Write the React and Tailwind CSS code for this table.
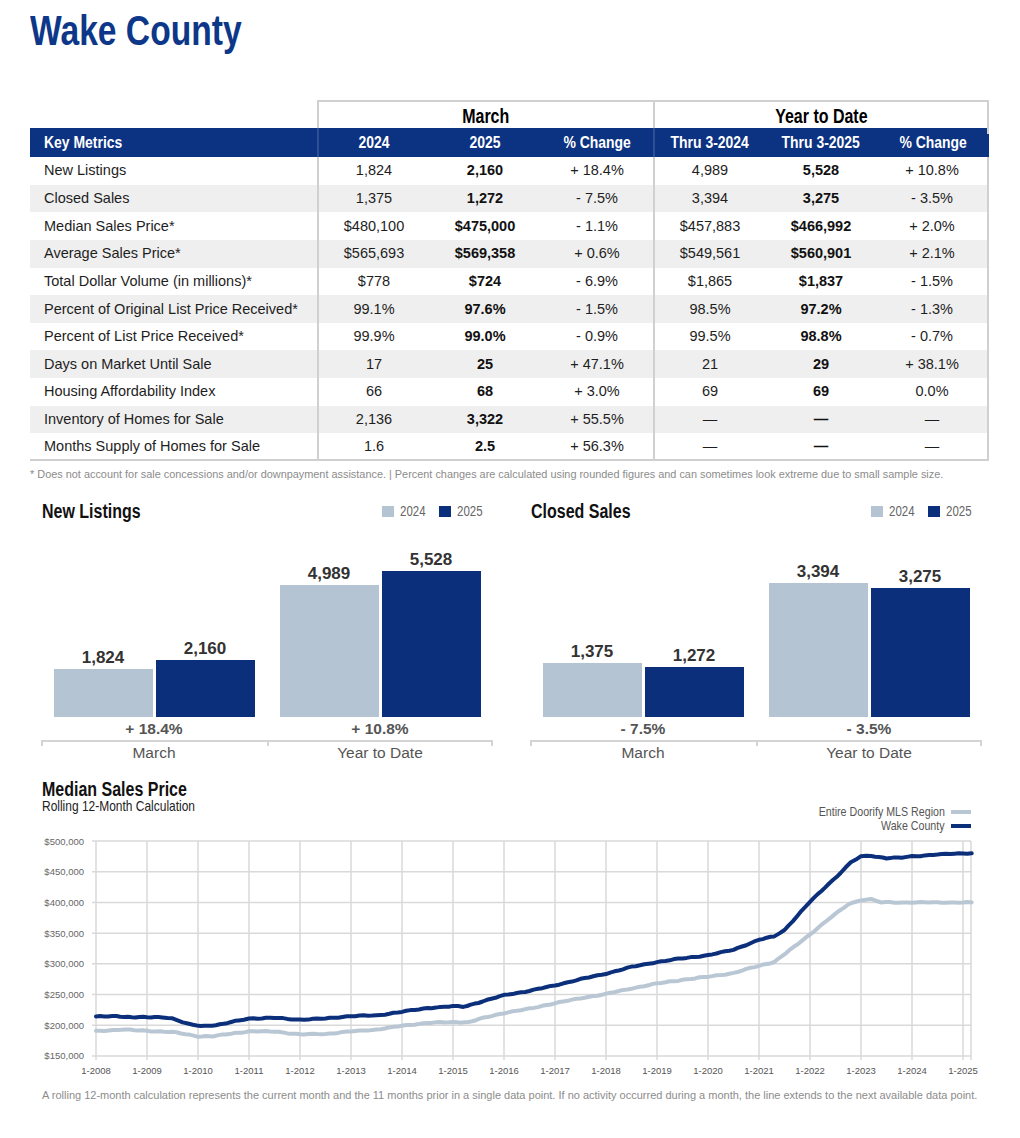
import React from "react";

function N({ children, className = "", origin = "origin-left" }) {
  return <span className={`inline-block whitespace-nowrap scale-x-[0.82] ${origin} ${className}`}>{children}</span>;
}

const rows = [
  ["New Listings", "1,824", "2,160", "+ 18.4%", "4,989", "5,528", "+ 10.8%"],
  ["Closed Sales", "1,375", "1,272", "- 7.5%", "3,394", "3,275", "- 3.5%"],
  ["Median Sales Price*", "$480,100", "$475,000", "- 1.1%", "$457,883", "$466,992", "+ 2.0%"],
  ["Average Sales Price*", "$565,693", "$569,358", "+ 0.6%", "$549,561", "$560,901", "+ 2.1%"],
  ["Total Dollar Volume (in millions)*", "$778", "$724", "- 6.9%", "$1,865", "$1,837", "- 1.5%"],
  ["Percent of Original List Price Received*", "99.1%", "97.6%", "- 1.5%", "98.5%", "97.2%", "- 1.3%"],
  ["Percent of List Price Received*", "99.9%", "99.0%", "- 0.9%", "99.5%", "98.8%", "- 0.7%"],
  ["Days on Market Until Sale", "17", "25", "+ 47.1%", "21", "29", "+ 38.1%"],
  ["Housing Affordability Index", "66", "68", "+ 3.0%", "69", "69", "0.0%"],
  ["Inventory of Homes for Sale", "2,136", "3,322", "+ 55.5%", "—", "—", "—"],
  ["Months Supply of Homes for Sale", "1.6", "2.5", "+ 56.3%", "—", "—", "—"],
];

function MetricsTable() {
  return (
    <div className="ml-[30px] w-[959px]">
      <div className="grid grid-cols-[287px_336px_336px] h-[28px]">
        <div />
        <div className="border-t-2 border-l-2 border-[#d0d0d0] flex items-center justify-center pb-[3px] text-[19.5px] font-bold text-black">
          <N origin="origin-center">March</N>
        </div>
        <div className="border-t-2 border-l-2 border-r-2 border-[#d0d0d0] flex items-center justify-center pb-[3px] text-[19.5px] font-bold text-black">
          <N origin="origin-center">Year to Date</N>
        </div>
      </div>
      <div className="grid grid-cols-[287px_repeat(6,112px)] h-[29px] bg-[#0c3282] text-white text-[17px] font-bold">
        <div className="flex items-center pl-[14px]"><N>Key Metrics</N></div>
        <div className="flex items-center justify-center border-l-2 border-[#2d4f95]"><N origin="origin-center">2024</N></div>
        <div className="flex items-center justify-center"><N origin="origin-center">2025</N></div>
        <div className="flex items-center justify-center"><N origin="origin-center">% Change</N></div>
        <div className="flex items-center justify-center border-l-2 border-[#2d4f95]"><N origin="origin-center">Thru 3-2024</N></div>
        <div className="flex items-center justify-center"><N origin="origin-center">Thru 3-2025</N></div>
        <div className="flex items-center justify-center"><N origin="origin-center">% Change</N></div>
      </div>
      {rows.map((r, i) => (
        <div
          key={r[0]}
          className={`grid grid-cols-[287px_repeat(6,112px)] h-[27.64px] text-[14.5px] text-[#1e1e1e] ${i % 2 === 1 ? "bg-[#efefef]" : "bg-white"} ${i === rows.length - 1 ? "border-b-2 border-[#d0d0d0]" : ""}`}
        >
          <div className="flex items-center pl-[14px] pt-[1px]">{r[0]}</div>
          <div className="flex items-center justify-center pt-[1px] border-l-2 border-[#d0d0d0]">{r[1]}</div>
          <div className="flex items-center justify-center pt-[1px] font-bold text-[#111]">{r[2]}</div>
          <div className="flex items-center justify-center pt-[1px]">{r[3]}</div>
          <div className="flex items-center justify-center pt-[1px] border-l-2 border-[#d0d0d0]">{r[4]}</div>
          <div className="flex items-center justify-center pt-[1px] font-bold text-[#111]">{r[5]}</div>
          <div className="flex items-center justify-center pt-[1px] border-r-2 border-[#d0d0d0]">{r[6]}</div>
        </div>
      ))}
    </div>
  );
}

function Legend() {
  return (
    <div className="flex items-center text-[14px] text-[#666]">
      <span className="w-[12px] h-[11px] bg-[#b5c4d3] mr-[6px]" />
      <span className="w-[25px] mr-[14px]"><N>2024</N></span>
      <span className="w-[12px] h-[11px] bg-[#0b2f7a] mr-[6px]" />
      <span className="w-[25px]"><N>2025</N></span>
    </div>
  );
}

function BarPanel({ title, groups, max, maxH }) {
  return (
    <div className="w-[452px]">
      <div className="flex items-center justify-between h-[22px] pr-[11px]">
        <div className="pl-[1px] text-[19.5px] font-bold text-[#111]"><N>{title}</N></div>
        <Legend />
      </div>
      <div className="flex h-[194px]">
        {groups.map((g) => (
          <div key={g.label} className="w-1/2 flex justify-center items-end gap-[3px]">
            {g.values.map((v, j) => (
              <div key={j} className="flex flex-col items-center w-[99px]">
                <div className="text-[17px] leading-[18px] font-bold text-[#333] mb-[2px]">
                  {v.toLocaleString("en-US")}
                </div>
                <div
                  className={`w-[99px] ${j === 0 ? "bg-[#b5c4d3]" : "bg-[#0b2f7a]"}`}
                  style={{ height: `${Math.round((v / max) * maxH)}px` }}
                />
              </div>
            ))}
          </div>
        ))}
      </div>
      <div className="flex h-[23px]">
        {groups.map((g) => (
          <div key={g.label} className="w-1/2 flex items-center justify-center text-[15.5px] font-bold text-[#555]">
            {g.change}
          </div>
        ))}
      </div>
      <div className="flex h-[6px]">
        <div className="w-1/2 border-t-2 border-l-2 border-[#d4d4d4]" />
        <div className="w-1/2 border-t-2 border-l-2 border-r-2 border-[#d4d4d4]" />
      </div>
      <div className="flex h-[14px]">
        {groups.map((g) => (
          <div key={g.label} className="w-1/2 flex items-center justify-center text-[15.5px] leading-[14px] text-[#555]">
            {g.label}
          </div>
        ))}
      </div>
    </div>
  );
}

const navyPts = [
  [2008.0, 214], [2008.4, 215], [2008.7, 213], [2009.0, 213], [2009.3, 213.5], [2009.5, 211], [2009.7, 205],
  [2009.9, 200], [2010.2, 199], [2010.5, 202], [2010.8, 208], [2011.0, 211], [2011.5, 212], [2012.0, 209],
  [2012.5, 211], [2013.0, 215], [2013.5, 216], [2014.0, 222], [2014.5, 228], [2015.0, 231], [2015.2, 230],
  [2015.5, 237], [2016.0, 249], [2016.5, 256], [2017.0, 265], [2017.5, 275], [2018.0, 284], [2018.5, 295],
  [2019.0, 303], [2019.5, 309], [2020.0, 314], [2020.5, 323], [2021.0, 339], [2021.3, 345], [2021.5, 355],
  [2021.75, 378], [2022.0, 401], [2022.3, 425], [2022.6, 448], [2022.8, 465], [2023.0, 475], [2023.2, 476],
  [2023.5, 472], [2023.8, 473], [2024.0, 475], [2024.5, 478], [2025.0, 480], [2025.17, 480],
];

const grayPts = [
  [2008.0, 190.5], [2008.5, 193], [2009.0, 191], [2009.5, 189], [2010.0, 182], [2010.3, 182], [2010.7, 187],
  [2011.0, 190], [2011.5, 190], [2012.0, 185], [2012.5, 186], [2013.0, 190], [2013.5, 193], [2014.0, 199],
  [2014.5, 204], [2015.0, 205], [2015.3, 205], [2015.6, 212], [2016.0, 220], [2016.5, 227], [2017.0, 236],
  [2017.5, 244], [2018.0, 251], [2018.5, 260], [2019.0, 268], [2019.5, 274], [2020.0, 279], [2020.5, 285],
  [2021.0, 297], [2021.3, 303], [2021.6, 322], [2022.0, 348], [2022.4, 375], [2022.75, 397], [2023.0, 404],
  [2023.2, 405], [2023.4, 400], [2025.17, 400],
];

const X0 = 96;
const PX_YEAR = 51;
const Y0 = 841;
const PX_50K = 30.71;
const xOf = (yr) => X0 + (yr - 2008) * PX_YEAR;
const yOf = (v) => Y0 + ((500 - v) / 50) * PX_50K;

function buildPath(pts, seed) {
  const out = [];
  for (let i = 0; i < pts.length - 1; i++) {
    const [y1, v1] = pts[i];
    const [y2, v2] = pts[i + 1];
    const steps = Math.max(1, Math.round((y2 - y1) * 12));
    for (let s = 0; s < steps; s++) {
      const t = s / steps;
      const yr = y1 + (y2 - y1) * t;
      const n = out.length;
      const jit = 0.5 * Math.sin(n * 1.7 + seed) + 0.3 * Math.sin(n * 0.6 + seed * 2);
      out.push([xOf(yr), yOf(v1 + (v2 - v1) * t + jit)]);
    }
  }
  const last = pts[pts.length - 1];
  out.push([xOf(last[0]), yOf(last[1])]);
  return out.map(([x, y], i) => `${i ? "L" : "M"}${x.toFixed(1)},${y.toFixed(1)}`).join(" ");
}

function MedianChart() {
  const years = Array.from({ length: 18 }, (_, i) => 2008 + i);
  const vals = [500, 450, 400, 350, 300, 250, 200, 150];
  const right = 971;
  return (
    <svg width="1020" height="244" viewBox="0 836 1020 244" className="block">
      {vals.map((v) => (
        <line key={v} x1="92" x2={right} y1={yOf(v)} y2={yOf(v)} stroke="#d9d9d9" strokeWidth="1.5" />
      ))}
      {years.map((y) => (
        <line key={y} x1={xOf(y)} x2={xOf(y)} y1={Y0} y2={1060} stroke="#d9d9d9" strokeWidth="1.5" />
      ))}
      <line x1={right} x2={right} y1={Y0} y2={1060} stroke="#d9d9d9" strokeWidth="1.5" />
      {vals.map((v) => (
        <text key={v} x="84" y={yOf(v) + 3.5} textAnchor="end" fontSize="9.5" fill="#666" fontFamily="'Liberation Sans', Arial, sans-serif">
          ${v},000
        </text>
      ))}
      {years.map((y) => (
        <text key={y} x={xOf(y)} y="1074" textAnchor="middle" fontSize="9.5" fill="#555" fontFamily="'Liberation Sans', Arial, sans-serif">
          1-{y}
        </text>
      ))}
      <path d={buildPath(grayPts, 1.3)} fill="none" stroke="#b9c7d4" strokeWidth="4" strokeLinejoin="round" strokeLinecap="round" />
      <path d={buildPath(navyPts, 0.4)} fill="none" stroke="#0b2f7a" strokeWidth="4" strokeLinejoin="round" strokeLinecap="round" />
    </svg>
  );
}

export default function App() {
  return (
    <div className="w-[1020px] h-[1138px] bg-white overflow-hidden font-['Liberation_Sans',Arial,sans-serif]">
      <h1 className="pl-[30px] pt-[10px] text-[42px] leading-[42px] font-bold text-[#0d3788]">
        <span className="inline-block whitespace-nowrap scale-x-[0.8] origin-left">Wake County</span>
      </h1>
      <div className="mt-[48px]">
        <MetricsTable />
      </div>
      <div className="mt-[6px] pl-[30px] text-[10.9px] leading-[14px] text-[#8c8c8c] whitespace-nowrap">
        * Does not account for sale concessions and/or downpayment assistance. | Percent changes are calculated using rounded figures and can sometimes look extreme due to small sample size.
      </div>
      <div className="mt-[20px] flex gap-[37px] pl-[41px]">
        <BarPanel
          title="New Listings"
          max={5528}
          maxH={146}
          groups={[
            { label: "March", values: [1824, 2160], change: "+ 18.4%" },
            { label: "Year to Date", values: [4989, 5528], change: "+ 10.8%" },
          ]}
        />
        <BarPanel
          title="Closed Sales"
          max={3394}
          maxH={134}
          groups={[
            { label: "March", values: [1375, 1272], change: "- 7.5%" },
            { label: "Year to Date", values: [3394, 3275], change: "- 3.5%" },
          ]}
        />
      </div>
      <div className="mt-[19px] flex items-start justify-between pl-[42px] pr-[49px] h-[53px]">
        <div>
          <div className="text-[19.5px] leading-[20px] font-bold text-[#111]"><N>Median Sales Price</N></div>
          <div className="text-[14.6px] leading-[14px] text-[#222]"><N>Rolling 12-Month Calculation</N></div>
        </div>
        <div className="mt-[26px] flex flex-col items-end text-[13px] leading-[14px] text-[#555]">
          <div className="flex items-center gap-[6px]">
            <N origin="origin-right">Entire Doorify MLS Region</N>
            <span className="w-[20px] h-[4px] bg-[#b9c7d4]" />
          </div>
          <div className="flex items-center gap-[6px]">
            <N origin="origin-right">Wake County</N>
            <span className="w-[20px] h-[4px] bg-[#0b2f7a]" />
          </div>
        </div>
      </div>
      <div className="mt-[4px]">
        <MedianChart />
      </div>
      <div className="mt-[8px] pl-[42px] text-[11px] leading-[14px] text-[#8c8c8c] whitespace-nowrap">
        A rolling 12-month calculation represents the current month and the 11 months prior in a single data point. If no activity occurred during a month, the line extends to the next available data point.
      </div>
    </div>
  );
}
